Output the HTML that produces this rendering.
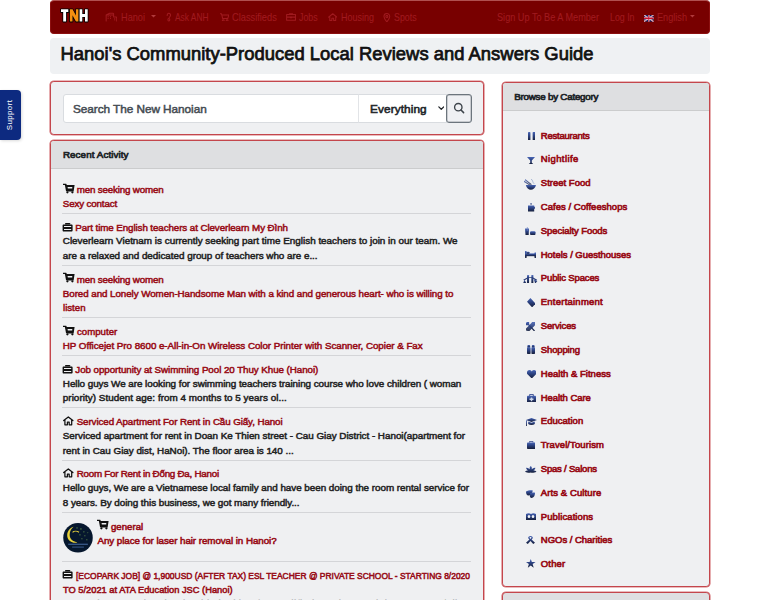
<!DOCTYPE html>
<html><head><meta charset="utf-8">
<style>
html,body{margin:0;padding:0;width:760px;height:600px;overflow:hidden;background:#fff;font-family:"Liberation Sans",sans-serif;}
.t{position:absolute;white-space:nowrap;-webkit-text-stroke:0.45px currentColor;}
.box{position:absolute;box-sizing:border-box;}
.sep{position:absolute;left:62px;width:409px;height:1px;background:#d4d5d8;}
.ic{position:absolute;line-height:0;}
.ic svg{display:block}
.navic *{vector-effect:non-scaling-stroke}
</style></head><body>
<!-- navbar -->
<div class="box" style="left:50px;top:0;width:660px;height:34px;background:#780000;border:1px solid #8c1010;border-top-color:#b05050;border-radius:4px;"></div>
<svg class="ic" style="left:59px;top:8px" width="31" height="16" viewBox="59 8 31 16"><g stroke="#000" stroke-width="1.6" stroke-linejoin="round" paint-order="stroke">
<path d="M61 9.3H68.3V12.1H66.1V21.6H63.2V12.1H61Z" fill="#fff"/>
<path d="M69.9 9.3H72.6L75.9 15.6V9.3H78.5V21.6H75.9L72.5 15.3V21.6H69.9Z" fill="#f39010"/>
<path d="M79.6 9.3H82.3V14.1H85V9.3H87.7V21.6H85V16.9H82.3V21.6H79.6Z" fill="#fff"/>
</g></svg>
<!-- title -->
<div class="box" style="left:50px;top:37.5px;width:660px;height:36.5px;background:#eff1f3;border-radius:4px"></div>
<!-- search card -->
<div class="box" style="left:50px;top:81px;width:434px;height:54px;background:#eff0f2;border:1px solid #c4464c;border-radius:3.8px;box-shadow:0 0 0 0.6px rgba(200,75,80,.75)"></div>
<div class="box" style="left:62.5px;top:94px;width:296px;height:28.5px;background:#fff;border:1px solid #d9dce0;border-radius:3px 0 0 3px"></div>
<div class="box" style="left:357.5px;top:94px;width:89px;height:28.5px;background:#fff;border:1px solid #d9dce0;border-left-color:#e2e4e7"></div>
<div class="box" style="left:446px;top:93.5px;width:26px;height:29px;background:#eff0f3;border:1px solid #6c757d;box-shadow:inset 0 0 0 0.5px rgba(108,117,125,.6);border-radius:3px"></div>
<!-- recent activity card -->
<div class="box" style="left:50px;top:139.5px;width:434px;height:520px;background:#eff0f2;border:1px solid #c4464c;border-radius:3.8px;box-shadow:0 0 0 0.6px rgba(200,75,80,.75);overflow:hidden">
  <div style="height:27.4px;background:#dedfe1;border-bottom:1px solid #cbcccd"></div>
</div>
<!-- category card -->
<div class="box" style="left:501.5px;top:81.5px;width:208.5px;height:505px;background:#eff0f2;border:1px solid #c4464c;border-radius:3.8px;box-shadow:0 0 0 0.6px rgba(200,75,80,.75);overflow:hidden">
  <div style="height:27.4px;background:#dedfe1;border-bottom:1px solid #cbcccd"></div>
</div>
<div class="box" style="left:501.5px;top:592px;width:208.5px;height:40px;background:#dedfe1;border:1px solid #c4464c;border-radius:3.8px;box-shadow:0 0 0 0.6px rgba(200,75,80,.75)"></div>
<!-- support tab -->
<div class="box" style="left:0;top:90px;width:20.5px;height:49.5px;background:#0d2a80;border-radius:0 4px 4px 0;box-shadow:1px 1px 3px rgba(0,0,0,.15)"></div>
<div class="t" style="left:-6px;top:110px;width:32px;text-align:center;font-size:8px;line-height:10px;letter-spacing:0.35px;color:#fff;transform:rotate(-90deg);-webkit-text-stroke:0">Support</div>
<!-- avatar -->
<svg class="ic" style="left:62.8px;top:523.4px" width="30" height="29.5" viewBox="0 0 30 30"><circle cx="15" cy="15" r="15" fill="#06172e"/>
<path d="M10.5 3.8C6.5 5 4 8.5 4 12.5C4 16.5 7 19.5 10.5 20C12.5 20.3 14 19.8 14.2 19.5C11 19.2 6.5 17 6.5 12C6.5 8.5 8.3 5.3 10.5 3.8Z" fill="#e8d23a"/>
<path d="M9.5 9.5C11 8 14 8 16 9.5" stroke="#e8d23a" stroke-width="1.2" fill="none"/>
<g fill="#6a9a50"><circle cx="18" cy="6" r=".7"/><circle cx="21" cy="9" r=".6"/><circle cx="17" cy="12" r=".6"/><circle cx="22" cy="13" r=".6"/><circle cx="19" cy="16" r=".6"/><circle cx="24" cy="17" r=".6"/><circle cx="14" cy="5" r=".6"/><circle cx="25" cy="10" r=".5"/></g>
<g fill="#3a5a8a"><rect x="5" y="21" width="20" height="1.3"/><rect x="9" y="24" width="12" height="1"/></g></svg>
<!-- carets, chevron, search icon, flag -->
<svg class="ic" style="left:150.5px;top:15.2px" width="5" height="2.5" viewBox="0 0 10 5"><path d="M0 0H10L5 5Z" fill="#b03a3c"/></svg>
<svg class="ic" style="left:690.2px;top:15.3px" width="4.8" height="2.5" viewBox="0 0 10 5"><path d="M0 0H10L5 5Z" fill="#b03a3c"/></svg>
<svg class="ic" style="left:437.8px;top:105.5px" width="6.5" height="4.5" viewBox="0 0 16 11"><path d="M2 2L8 8L14 2" fill="none" stroke="#212529" stroke-width="3" stroke-linecap="round" stroke-linejoin="round"/></svg>
<svg class="ic" style="left:452px;top:101px" width="14" height="14" viewBox="452 101 14 14"><circle cx="458.3" cy="107.2" r="3.7" fill="none" stroke="#3d434a" stroke-width="1.35"/><path d="M461 110L463.6 112.6" stroke="#3d434a" stroke-width="1.5" stroke-linecap="round"/></svg>
<svg class="ic" style="left:644.2px;top:15.3px" width="9.5" height="6.5" viewBox="0 0 60 30" preserveAspectRatio="none"><rect width="60" height="30" fill="#012169"/><path d="M0 0L60 30M60 0L0 30" stroke="#fff" stroke-width="6"/><path d="M0 0L60 30M60 0L0 30" stroke="#C8102E" stroke-width="2.5"/><path d="M30 0V30M0 15H60" stroke="#fff" stroke-width="10"/><path d="M30 0V30M0 15H60" stroke="#C8102E" stroke-width="6"/></svg>
<div class="sep" style="top:213px"></div>
<div class="sep" style="top:265px"></div>
<div class="sep" style="top:317px"></div>
<div class="sep" style="top:355px"></div>
<div class="sep" style="top:407px"></div>
<div class="sep" style="top:460px"></div>
<div class="sep" style="top:512px"></div>
<div class="sep" style="top:561px"></div>
<div class="ic" style="left:62.5px;top:182.5px"><svg width="12" height="11" viewBox="0 0 12 11"><path d="M0.3 1.35H3" stroke="#111" stroke-width="1.3" stroke-linecap="round"/><path d="M2.6 1.6L3.8 8.2" stroke="#111" stroke-width="1.5"/><path d="M2.9 1.9H11.6L10.6 8.6H3.9ZM4.6 4.1H9.3L9.2 5.4H4.8Z" fill="#111" fill-rule="evenodd"/><circle cx="4.4" cy="9.3" r="1.15" fill="#111"/><circle cx="9.4" cy="9.3" r="1.15" fill="#111"/></svg></div>
<div class="ic" style="left:62.2px;top:222.0px"><svg width="11" height="10" viewBox="0 0 11 10"><path d="M3 2.6V1.6C3 1.2 3.3 1 3.6 1H7.6C7.9 1 8.2 1.2 8.2 1.6V2.6Z" fill="#111"/><path d="M1.6 2.4H9.5C10.1 2.4 10.6 2.8 10.6 3.4V8.4C10.6 9 10.1 9.5 9.5 9.5H1.6C1 9.5 .6 9 .6 8.4V3.4C.6 2.8 1 2.4 1.6 2.4ZM2 4V5H9.2V4ZM2 7V8H9.2V7Z" fill="#111" fill-rule="evenodd"/></svg></div>
<div class="ic" style="left:62.5px;top:272.3px"><svg width="12" height="11" viewBox="0 0 12 11"><path d="M0.3 1.35H3" stroke="#111" stroke-width="1.3" stroke-linecap="round"/><path d="M2.6 1.6L3.8 8.2" stroke="#111" stroke-width="1.5"/><path d="M2.9 1.9H11.6L10.6 8.6H3.9ZM4.6 4.1H9.3L9.2 5.4H4.8Z" fill="#111" fill-rule="evenodd"/><circle cx="4.4" cy="9.3" r="1.15" fill="#111"/><circle cx="9.4" cy="9.3" r="1.15" fill="#111"/></svg></div>
<div class="ic" style="left:62.5px;top:324.8px"><svg width="12" height="11" viewBox="0 0 12 11"><path d="M0.3 1.35H3" stroke="#111" stroke-width="1.3" stroke-linecap="round"/><path d="M2.6 1.6L3.8 8.2" stroke="#111" stroke-width="1.5"/><path d="M2.9 1.9H11.6L10.6 8.6H3.9ZM4.6 4.1H9.3L9.2 5.4H4.8Z" fill="#111" fill-rule="evenodd"/><circle cx="4.4" cy="9.3" r="1.15" fill="#111"/><circle cx="9.4" cy="9.3" r="1.15" fill="#111"/></svg></div>
<div class="ic" style="left:62.2px;top:364.0px"><svg width="11" height="10" viewBox="0 0 11 10"><path d="M3 2.6V1.6C3 1.2 3.3 1 3.6 1H7.6C7.9 1 8.2 1.2 8.2 1.6V2.6Z" fill="#111"/><path d="M1.6 2.4H9.5C10.1 2.4 10.6 2.8 10.6 3.4V8.4C10.6 9 10.1 9.5 9.5 9.5H1.6C1 9.5 .6 9 .6 8.4V3.4C.6 2.8 1 2.4 1.6 2.4ZM2 4V5H9.2V4ZM2 7V8H9.2V7Z" fill="#111" fill-rule="evenodd"/></svg></div>
<div class="ic" style="left:62.5px;top:416.4px"><svg width="11" height="10" viewBox="0 0 11 10"><path d="M0.7 4.6L5.3 0.9L9.9 4.6M1.9 3.8V8.8H4.4V6.2H6.2V8.8H8.7V3.8" fill="none" stroke="#111" stroke-width="1.25" stroke-linejoin="round" stroke-linecap="round"/></svg></div>
<div class="ic" style="left:62.5px;top:468.4px"><svg width="11" height="10" viewBox="0 0 11 10"><path d="M0.7 4.6L5.3 0.9L9.9 4.6M1.9 3.8V8.8H4.4V6.2H6.2V8.8H8.7V3.8" fill="none" stroke="#111" stroke-width="1.25" stroke-linejoin="round" stroke-linecap="round"/></svg></div>
<div class="ic" style="left:96.6px;top:519.4px"><svg width="12" height="11" viewBox="0 0 12 11"><path d="M0.3 1.35H3" stroke="#111" stroke-width="1.3" stroke-linecap="round"/><path d="M2.6 1.6L3.8 8.2" stroke="#111" stroke-width="1.5"/><path d="M2.9 1.9H11.6L10.6 8.6H3.9ZM4.6 4.1H9.3L9.2 5.4H4.8Z" fill="#111" fill-rule="evenodd"/><circle cx="4.4" cy="9.3" r="1.15" fill="#111"/><circle cx="9.4" cy="9.3" r="1.15" fill="#111"/></svg></div>
<div class="ic" style="left:62.2px;top:569px"><svg width="11" height="10" viewBox="0 0 11 10"><path d="M3 2.6V1.6C3 1.2 3.3 1 3.6 1H7.6C7.9 1 8.2 1.2 8.2 1.6V2.6Z" fill="#111"/><path d="M1.6 2.4H9.5C10.1 2.4 10.6 2.8 10.6 3.4V8.4C10.6 9 10.1 9.5 9.5 9.5H1.6C1 9.5 .6 9 .6 8.4V3.4C.6 2.8 1 2.4 1.6 2.4ZM2 4V5H9.2V4ZM2 7V8H9.2V7Z" fill="#111" fill-rule="evenodd"/></svg></div>
<svg width="0" height="0" style="position:absolute"><defs><linearGradient id="cg" x1="0" y1="0" x2="0" y2="1"><stop offset="0" stop-color="#4865b5"/><stop offset="0.45" stop-color="#2b4180"/><stop offset="1" stop-color="#161f3a"/></linearGradient></defs></svg>
<svg class="ic" style="left:527.7px;top:131.6px" width="7.5" height="8.7" viewBox="0 0 100 100" preserveAspectRatio="none" fill="url(#cg)"><rect x="0" y="0" width="32" height="100" rx="10"/><rect x="62" y="0" width="38" height="100" rx="10"/></svg>
<svg class="ic" style="left:527px;top:156.5px" width="8.0" height="7.5" viewBox="0 0 100 100" preserveAspectRatio="none" fill="url(#cg)"><path d="M0 0H100L60 45V75L85 100H15L40 75V45Z"/></svg>
<svg class="ic" style="left:524px;top:179px" width="12.0" height="10.7" viewBox="0 0 100 100" preserveAspectRatio="none" fill="url(#cg)"><path d="M0 15L55 55L48 60L0 28Z" opacity=".8"/><path d="M10 0L65 50L58 55L8 12Z" opacity=".8"/><path d="M60 0C75 15 70 30 85 45" stroke="#9fb0d0" stroke-width="8" fill="none"/><path d="M15 55H100C95 85 75 100 57 100C40 100 20 85 15 55Z"/></svg>
<svg class="ic" style="left:527.7px;top:203px" width="7.3" height="8.6" viewBox="0 0 100 100" preserveAspectRatio="none" fill="url(#cg)"><circle cx="42" cy="10" r="12" opacity=".7"/><path d="M0 28H85V40C100 40 100 70 85 70V100H0Z"/></svg>
<svg class="ic" style="left:525.3px;top:227.2px" width="10.5" height="8.1" viewBox="0 0 100 100" preserveAspectRatio="none" fill="url(#cg)"><path d="M0 20L38 20L35 100H5Z"/><path d="M22 0V50" stroke="#6d85c0" stroke-width="7"/><rect x="48" y="52" width="52" height="48" rx="12"/></svg>
<svg class="ic" style="left:525px;top:251.2px" width="11.1" height="6.9" viewBox="0 0 100 100" preserveAspectRatio="none" fill="url(#cg)"><rect x="0" y="0" width="15" height="100" rx="5"/><rect x="85" y="20" width="15" height="80" rx="5"/><rect x="0" y="35" width="100" height="40"/><rect x="15" y="10" width="25" height="30" rx="8"/></svg>
<svg class="ic" style="left:523.3px;top:274.7px" width="14.4" height="8.6" viewBox="0 0 100 100" preserveAspectRatio="none" fill="url(#cg)"><path d="M0 100L10 55L25 100Z"/><rect x="28" y="0" width="14" height="100" rx="6"/><rect x="58" y="0" width="14" height="100" rx="6"/><path d="M75 50L100 70L85 100Z"/><path d="M5 60L35 30L65 30L95 60" stroke="#2a3e78" stroke-width="10" fill="none"/></svg>
<svg class="ic" style="left:526.5px;top:297.6px" width="8.5" height="9.4" viewBox="0 0 100 100" preserveAspectRatio="none" fill="url(#cg)"><path d="M40 0L100 60L60 100L0 40Z"/></svg>
<svg class="ic" style="left:526px;top:321.6px" width="9.0" height="9.4" viewBox="0 0 100 100" preserveAspectRatio="none" fill="url(#cg)"><path d="M10 0L35 0L35 25L100 90L90 100L25 35L0 35L0 10Z"/><path d="M65 0L100 0L100 35L35 100L0 90L0 70L65 5Z" opacity=".9"/></svg>
<svg class="ic" style="left:527px;top:345px" width="8.0" height="9.0" viewBox="0 0 100 100" preserveAspectRatio="none" fill="url(#cg)"><rect x="5" y="0" width="35" height="30" rx="10"/><rect x="60" y="0" width="35" height="30" rx="10"/><rect x="0" y="25" width="45" height="75" rx="8"/><rect x="55" y="25" width="45" height="75" rx="8"/></svg>
<svg class="ic" style="left:526.5px;top:369.5px" width="9.5" height="8.5" viewBox="0 0 100 100" preserveAspectRatio="none" fill="url(#cg)"><path d="M50 100L5 50C-10 30 5 0 27 0C40 0 47 10 50 18C53 10 60 0 73 0C95 0 110 30 95 50Z"/></svg>
<svg class="ic" style="left:526.5px;top:393.5px" width="9.0" height="8.5" viewBox="0 0 100 100" preserveAspectRatio="none" fill="url(#cg)"><path d="M30 25V5H70V25" stroke="#2a4088" stroke-width="10" fill="none"/><rect x="0" y="22" width="100" height="78" rx="8"/><path d="M42 40H58V54H72V70H58V84H42V70H28V54H42Z" fill="#cfd8ea"/></svg>
<svg class="ic" style="left:526px;top:418px" width="11.0" height="8.0" viewBox="0 0 100 100" preserveAspectRatio="none" fill="url(#cg)"><path d="M50 0L100 25L50 50L0 25Z"/><path d="M20 45V75C35 90 65 90 80 75V45L50 60Z"/><rect x="0" y="30" width="8" height="70"/></svg>
<svg class="ic" style="left:526.5px;top:441px" width="8.5" height="8.0" viewBox="0 0 100 100" preserveAspectRatio="none" fill="url(#cg)"><path d="M30 20V5H70V20" stroke="#2a4088" stroke-width="10" fill="none"/><rect x="0" y="18" width="100" height="82" rx="10"/></svg>
<svg class="ic" style="left:525px;top:465.5px" width="11.5" height="7.0" viewBox="0 0 100 100" preserveAspectRatio="none" fill="url(#cg)"><path d="M50 0C60 10 62 30 58 45C70 30 85 25 90 25C90 45 80 60 70 65C85 65 95 70 100 82C80 100 60 100 50 94C40 100 20 100 0 82C5 70 15 65 30 65C20 60 10 45 10 25C15 25 30 30 42 45C38 30 40 10 50 0Z"/></svg>
<svg class="ic" style="left:526px;top:489.5px" width="9.0" height="8.0" viewBox="0 0 100 100" preserveAspectRatio="none" fill="url(#cg)"><path d="M0 20C20 5 55 0 75 5C70 40 60 65 30 70C5 70 0 45 0 20Z"/><path d="M45 40C65 30 90 30 100 35C100 70 85 100 60 100C40 95 40 70 45 40Z"/></svg>
<svg class="ic" style="left:526px;top:513px" width="10.0" height="7.0" viewBox="0 0 100 100" preserveAspectRatio="none" fill="url(#cg)"><path d="M0 15C15 0 38 0 50 15C62 0 85 0 100 15V100H0Z"/><ellipse cx="30" cy="50" rx="13" ry="22" fill="#f0f2f6"/><ellipse cx="70" cy="50" rx="13" ry="22" fill="#f0f2f6"/></svg>
<svg class="ic" style="left:526px;top:536px" width="9.0" height="8.0" viewBox="0 0 100 100" preserveAspectRatio="none" fill="url(#cg)"><path d="M50 0C68 0 78 12 75 28L62 45L100 85L80 100L50 62L20 100L0 85L38 45L25 28C22 12 32 0 50 0ZM50 12C42 12 38 18 40 26L50 38L60 26C62 18 58 12 50 12Z" fill-rule="evenodd"/></svg>
<svg class="ic" style="left:526px;top:559.3px" width="9.5" height="8.7" viewBox="0 0 100 100" preserveAspectRatio="none" fill="url(#cg)"><path d="M50 0L62 35H100L70 57L81 100L50 75L19 100L30 57L0 35H38Z"/></svg>
<svg class="ic navic" style="left:104.5px;top:12.3px" width="12.5" height="9.5" viewBox="0 0 16 16" preserveAspectRatio="none" fill="none" stroke="#a01a1f" stroke-width="1.05" stroke-linecap="round" stroke-linejoin="round"><path d="M1.5 15V5L6 2H10L11 3V8.5H14.5L15 10V15M1.5 5H11M4 7.5V8M4 10.5V11M7 7.5V8M7 10.5V11M12.5 11V11.5M12.5 13V13.5" /></svg>
<svg class="ic navic" style="left:165.3px;top:12.3px" width="7.7" height="9.5" viewBox="0 0 16 16" preserveAspectRatio="none" fill="none" stroke="#a01a1f" stroke-width="1.05" stroke-linecap="round" stroke-linejoin="round"><path d="M4.5 6C4.5 3.5 6 2 8 2C10 2 11.5 3.5 11.5 5.5C11.5 7.5 9.5 8 8.8 9.5L8 11M8 11C6.5 11 6 12.5 6 13.2C6 14.3 7 15 8 15C9 15 10 14.3 10 13.2C10 12.2 9.2 11 8 11Z"/></svg>
<svg class="ic navic" style="left:219.5px;top:12.5px" width="9.5" height="8.9" viewBox="0 0 16 16" preserveAspectRatio="none" fill="none" stroke="#a01a1f" stroke-width="1.05" stroke-linecap="round" stroke-linejoin="round"><path d="M0.5 1.5H2.5L3 3.5M3 3.5L4.5 10H13L15 3.5H3Z"/><circle cx="5.5" cy="13.5" r="1.5"/><circle cx="12" cy="13.5" r="1.5"/></svg>
<svg class="ic navic" style="left:285.8px;top:13.1px" width="10.1" height="8.3" viewBox="0 0 16 16" preserveAspectRatio="none" fill="none" stroke="#a01a1f" stroke-width="1.05" stroke-linecap="round" stroke-linejoin="round"><path d="M5.5 3V1.5H10.5V3M1 3H15V14H1ZM1 8H15M7 7.5V9H9V7.5"/></svg>
<svg class="ic navic" style="left:327.7px;top:13.1px" width="9.5" height="8.3" viewBox="0 0 16 16" preserveAspectRatio="none" fill="none" stroke="#a01a1f" stroke-width="1.05" stroke-linecap="round" stroke-linejoin="round"><path d="M1 8L8 1.5L15 8M3 6.5V14.5H6.5V10H9.5V14.5H13V6.5"/></svg>
<svg class="ic navic" style="left:383.4px;top:12.5px" width="7.7" height="9.5" viewBox="0 0 16 16" preserveAspectRatio="none" fill="none" stroke="#a01a1f" stroke-width="1.05" stroke-linecap="round" stroke-linejoin="round"><path d="M8 15C8 15 2 9 2 6C2 2.7 4.7 1 8 1C11.3 1 14 2.7 14 6C14 9 8 15 8 15Z"/><circle cx="8" cy="6" r="2"/></svg>
<div class="t" style="left:76.7px;top:183.82px;font-size:9.8px;line-height:11.76px;color:#980c16;-webkit-text-stroke-width:0.5px;letter-spacing:-0.179px">men seeking women</div>
<div class="t" style="left:62.8px;top:197.82px;font-size:9.8px;line-height:11.76px;color:#980c16;-webkit-text-stroke-width:0.5px;letter-spacing:-0.154px">Sexy contact</div>
<div class="t" style="left:75.3px;top:221.82px;font-size:9.8px;line-height:11.76px;color:#980c16;-webkit-text-stroke-width:0.5px;letter-spacing:-0.095px">Part time English teachers at Cleverlearn My Đình</div>
<div class="t" style="left:62.8px;top:235.43px;font-size:9.9px;line-height:11.88px;color:#232323;-webkit-text-stroke-width:0.5px;letter-spacing:-0.000px">Cleverlearn Vietnam is currently seeking part time English teachers to join in our team. We</div>
<div class="t" style="left:62.8px;top:249.83px;font-size:9.9px;line-height:11.88px;color:#232323;-webkit-text-stroke-width:0.5px;letter-spacing:-0.028px">are a relaxed and dedicated group of teachers who are e...</div>
<div class="t" style="left:76.7px;top:273.62px;font-size:9.8px;line-height:11.76px;color:#980c16;-webkit-text-stroke-width:0.5px;letter-spacing:-0.179px">men seeking women</div>
<div class="t" style="left:62.8px;top:287.72px;font-size:9.8px;line-height:11.76px;color:#980c16;-webkit-text-stroke-width:0.5px;letter-spacing:-0.068px">Bored and Lonely Women-Handsome Man with a kind and generous heart- who is willing to</div>
<div class="t" style="left:62.8px;top:302.12px;font-size:9.8px;line-height:11.76px;color:#980c16;-webkit-text-stroke-width:0.5px;letter-spacing:0.000px;transform:scaleX(0.9850);transform-origin:0 0">listen</div>
<div class="t" style="left:76.7px;top:326.12px;font-size:9.8px;line-height:11.76px;color:#980c16;-webkit-text-stroke-width:0.5px;letter-spacing:0.000px;transform:scaleX(0.9850);transform-origin:0 0">computer</div>
<div class="t" style="left:62.8px;top:339.92px;font-size:9.8px;line-height:11.76px;color:#980c16;-webkit-text-stroke-width:0.5px;letter-spacing:-0.043px">HP Officejet Pro 8600 e-All-in-On Wireless Color Printer with Scanner, Copier &amp; Fax</div>
<div class="t" style="left:75.3px;top:363.82px;font-size:9.8px;line-height:11.76px;color:#980c16;-webkit-text-stroke-width:0.5px;letter-spacing:-0.068px">Job opportunity at Swimming Pool 20 Thuy Khue (Hanoi)</div>
<div class="t" style="left:62.8px;top:377.83px;font-size:9.9px;line-height:11.88px;color:#232323;-webkit-text-stroke-width:0.5px;letter-spacing:-0.053px">Hello guys We are looking for swimming teachers training course who love children ( woman</div>
<div class="t" style="left:62.8px;top:392.33px;font-size:9.9px;line-height:11.88px;color:#232323;-webkit-text-stroke-width:0.5px;letter-spacing:0.031px">priority) Student age: from 4 months to 5 years ol...</div>
<div class="t" style="left:76.7px;top:416.32px;font-size:9.8px;line-height:11.76px;color:#980c16;-webkit-text-stroke-width:0.5px;letter-spacing:-0.103px">Serviced Apartment For Rent in Cầu Giấy, Hanoi</div>
<div class="t" style="left:62.8px;top:430.33px;font-size:9.9px;line-height:11.88px;color:#232323;-webkit-text-stroke-width:0.5px;letter-spacing:-0.034px">Serviced apartment for rent in Doan Ke Thien street - Cau Giay District - Hanoi(apartment for</div>
<div class="t" style="left:62.8px;top:444.83px;font-size:9.9px;line-height:11.88px;color:#232323;-webkit-text-stroke-width:0.5px;letter-spacing:-0.030px">rent in Cau Giay dist, HaNoi). The floor area is 140 ...</div>
<div class="t" style="left:76.7px;top:468.32px;font-size:9.8px;line-height:11.76px;color:#980c16;-webkit-text-stroke-width:0.5px;letter-spacing:-0.242px">Room For Rent in Đống Đa, Hanoi</div>
<div class="t" style="left:62.8px;top:482.33px;font-size:9.9px;line-height:11.88px;color:#232323;-webkit-text-stroke-width:0.5px;letter-spacing:-0.044px">Hello guys, We are a Vietnamese local family and have been doing the room rental service for</div>
<div class="t" style="left:62.8px;top:497.43px;font-size:9.9px;line-height:11.88px;color:#232323;-webkit-text-stroke-width:0.5px;letter-spacing:-0.054px">8 years. By doing this business, we got many friendly...</div>
<div class="t" style="left:111.0px;top:520.72px;font-size:9.8px;line-height:11.76px;color:#980c16;-webkit-text-stroke-width:0.55px;letter-spacing:0.000px;transform:scaleX(0.9850);transform-origin:0 0">general</div>
<div class="t" style="left:97.5px;top:535.12px;font-size:9.8px;line-height:11.76px;color:#980c16;-webkit-text-stroke-width:0.55px;letter-spacing:-0.068px">Any place for laser hair removal in Hanoi?</div>
<div class="t" style="left:75.7px;top:569.72px;font-size:9.8px;line-height:11.76px;color:#980c16;-webkit-text-stroke-width:0.55px;letter-spacing:0.000px;transform:scaleX(0.8620);transform-origin:0 0">[ECOPARK JOB] @ 1,900USD (AFTER TAX) ESL TEACHER @ PRIVATE SCHOOL - STARTING 8/2020</div>
<div class="t" style="left:62.8px;top:583.72px;font-size:9.8px;line-height:11.76px;color:#980c16;-webkit-text-stroke-width:0.55px;letter-spacing:0.000px;transform:scaleX(0.9495);transform-origin:0 0">TO 5/2021 at ATA Education JSC (Hanoi)</div>
<div class="t" style="left:62.8px;top:597.83px;font-size:9.9px;line-height:11.88px;color:#232323;-webkit-text-stroke-width:0.45px;letter-spacing:0.527px">Ecopark International School is looking for qualified teachers to join our team fully</div>
<div class="t" style="left:62.9px;top:148.52px;font-size:9.8px;line-height:11.76px;color:#212529;-webkit-text-stroke-width:0.7px;letter-spacing:0.096px">Recent Activity</div>
<div class="t" style="left:514.2px;top:90.52px;font-size:9.8px;line-height:11.76px;color:#212529;-webkit-text-stroke-width:0.7px;letter-spacing:-0.231px">Browse by Category</div>
<div class="t" style="left:540.8px;top:129.51px;font-size:9.5px;line-height:11.40px;color:#980c16;-webkit-text-stroke-width:0.65px;letter-spacing:-0.233px">Restaurants</div>
<div class="t" style="left:540.8px;top:153.33px;font-size:9.5px;line-height:11.40px;color:#980c16;-webkit-text-stroke-width:0.65px;letter-spacing:0.384px">Nightlife</div>
<div class="t" style="left:540.8px;top:177.15px;font-size:9.5px;line-height:11.40px;color:#980c16;-webkit-text-stroke-width:0.65px;letter-spacing:0.006px">Street Food</div>
<div class="t" style="left:540.8px;top:200.97px;font-size:9.5px;line-height:11.40px;color:#980c16;-webkit-text-stroke-width:0.65px;letter-spacing:0.027px">Cafes / Coffeeshops</div>
<div class="t" style="left:540.8px;top:224.79px;font-size:9.5px;line-height:11.40px;color:#980c16;-webkit-text-stroke-width:0.65px;letter-spacing:-0.078px">Specialty Foods</div>
<div class="t" style="left:540.8px;top:248.61px;font-size:9.5px;line-height:11.40px;color:#980c16;-webkit-text-stroke-width:0.65px;letter-spacing:-0.033px">Hotels / Guesthouses</div>
<div class="t" style="left:540.8px;top:272.43px;font-size:9.5px;line-height:11.40px;color:#980c16;-webkit-text-stroke-width:0.65px;letter-spacing:-0.142px">Public Spaces</div>
<div class="t" style="left:540.8px;top:296.25px;font-size:9.5px;line-height:11.40px;color:#980c16;-webkit-text-stroke-width:0.65px;letter-spacing:0.229px">Entertainment</div>
<div class="t" style="left:540.8px;top:320.07px;font-size:9.5px;line-height:11.40px;color:#980c16;-webkit-text-stroke-width:0.65px;letter-spacing:-0.177px">Services</div>
<div class="t" style="left:540.8px;top:343.89px;font-size:9.5px;line-height:11.40px;color:#980c16;-webkit-text-stroke-width:0.65px;letter-spacing:-0.137px">Shopping</div>
<div class="t" style="left:540.8px;top:367.71px;font-size:9.5px;line-height:11.40px;color:#980c16;-webkit-text-stroke-width:0.65px;letter-spacing:0.013px">Health &amp; Fitness</div>
<div class="t" style="left:540.8px;top:391.53px;font-size:9.5px;line-height:11.40px;color:#980c16;-webkit-text-stroke-width:0.65px;letter-spacing:-0.070px">Health Care</div>
<div class="t" style="left:540.8px;top:415.35px;font-size:9.5px;line-height:11.40px;color:#980c16;-webkit-text-stroke-width:0.65px;letter-spacing:0.017px">Education</div>
<div class="t" style="left:540.8px;top:439.17px;font-size:9.5px;line-height:11.40px;color:#980c16;-webkit-text-stroke-width:0.65px;letter-spacing:0.089px">Travel/Tourism</div>
<div class="t" style="left:540.8px;top:462.99px;font-size:9.5px;line-height:11.40px;color:#980c16;-webkit-text-stroke-width:0.65px;letter-spacing:-0.202px">Spas / Salons</div>
<div class="t" style="left:540.8px;top:486.81px;font-size:9.5px;line-height:11.40px;color:#980c16;-webkit-text-stroke-width:0.65px;letter-spacing:0.097px">Arts &amp; Culture</div>
<div class="t" style="left:540.8px;top:510.63px;font-size:9.5px;line-height:11.40px;color:#980c16;-webkit-text-stroke-width:0.65px;letter-spacing:0.097px">Publications</div>
<div class="t" style="left:540.8px;top:534.45px;font-size:9.5px;line-height:11.40px;color:#980c16;-webkit-text-stroke-width:0.65px;letter-spacing:-0.020px">NGOs / Charities</div>
<div class="t" style="left:540.8px;top:558.27px;font-size:9.5px;line-height:11.40px;color:#980c16;-webkit-text-stroke-width:0.65px;letter-spacing:0.159px">Other</div>
<div class="t" style="left:120.5px;top:12.05px;font-size:10.2px;line-height:12.24px;color:#a01a1f;-webkit-text-stroke-width:0.1px;letter-spacing:0.000px;transform:scaleX(0.9014);transform-origin:0 0">Hanoi</div>
<div class="t" style="left:175.4px;top:12.05px;font-size:10.2px;line-height:12.24px;color:#a01a1f;-webkit-text-stroke-width:0.1px;letter-spacing:0.000px;transform:scaleX(0.8242);transform-origin:0 0">Ask ANH</div>
<div class="t" style="left:232.0px;top:12.05px;font-size:10.2px;line-height:12.24px;color:#a01a1f;-webkit-text-stroke-width:0.1px;letter-spacing:0.000px;transform:scaleX(0.9094);transform-origin:0 0">Classifieds</div>
<div class="t" style="left:299.0px;top:12.05px;font-size:10.2px;line-height:12.24px;color:#a01a1f;-webkit-text-stroke-width:0.1px;letter-spacing:0.000px;transform:scaleX(0.8639);transform-origin:0 0">Jobs</div>
<div class="t" style="left:340.9px;top:12.05px;font-size:10.2px;line-height:12.24px;color:#a01a1f;-webkit-text-stroke-width:0.1px;letter-spacing:0.000px;transform:scaleX(0.8852);transform-origin:0 0">Housing</div>
<div class="t" style="left:393.7px;top:12.05px;font-size:10.2px;line-height:12.24px;color:#a01a1f;-webkit-text-stroke-width:0.1px;letter-spacing:0.000px;transform:scaleX(0.8671);transform-origin:0 0">Spots</div>
<div class="t" style="left:497.4px;top:12.05px;font-size:10.2px;line-height:12.24px;color:#a01a1f;-webkit-text-stroke-width:0.1px;letter-spacing:0.000px;transform:scaleX(0.8976);transform-origin:0 0">Sign Up To Be A Member</div>
<div class="t" style="left:609.5px;top:12.05px;font-size:10.2px;line-height:12.24px;color:#a01a1f;-webkit-text-stroke-width:0.1px;letter-spacing:0.000px;transform:scaleX(0.8649);transform-origin:0 0">Log In</div>
<div class="t" style="left:656.8px;top:12.05px;font-size:10.2px;line-height:12.24px;color:#a01a1f;-webkit-text-stroke-width:0.1px;letter-spacing:0.000px;transform:scaleX(0.8976);transform-origin:0 0">English</div>
<div class="t" style="left:73.0px;top:102.23px;font-size:11.8px;line-height:14.16px;color:#454c53;-webkit-text-stroke-width:0.5px;letter-spacing:-0.056px">Search The New Hanoian</div>
<div class="t" style="left:370.1px;top:102.23px;font-size:11.8px;line-height:14.16px;color:#212529;-webkit-text-stroke-width:0.6px;letter-spacing:0.094px">Everything</div>
<div class="t" style="left:60.5px;top:42.78px;font-size:18.4px;line-height:22.08px;color:#111;-webkit-text-stroke-width:0.75px;letter-spacing:0.018px">Hanoi's Community-Produced Local Reviews and Answers Guide</div>
</body></html>
